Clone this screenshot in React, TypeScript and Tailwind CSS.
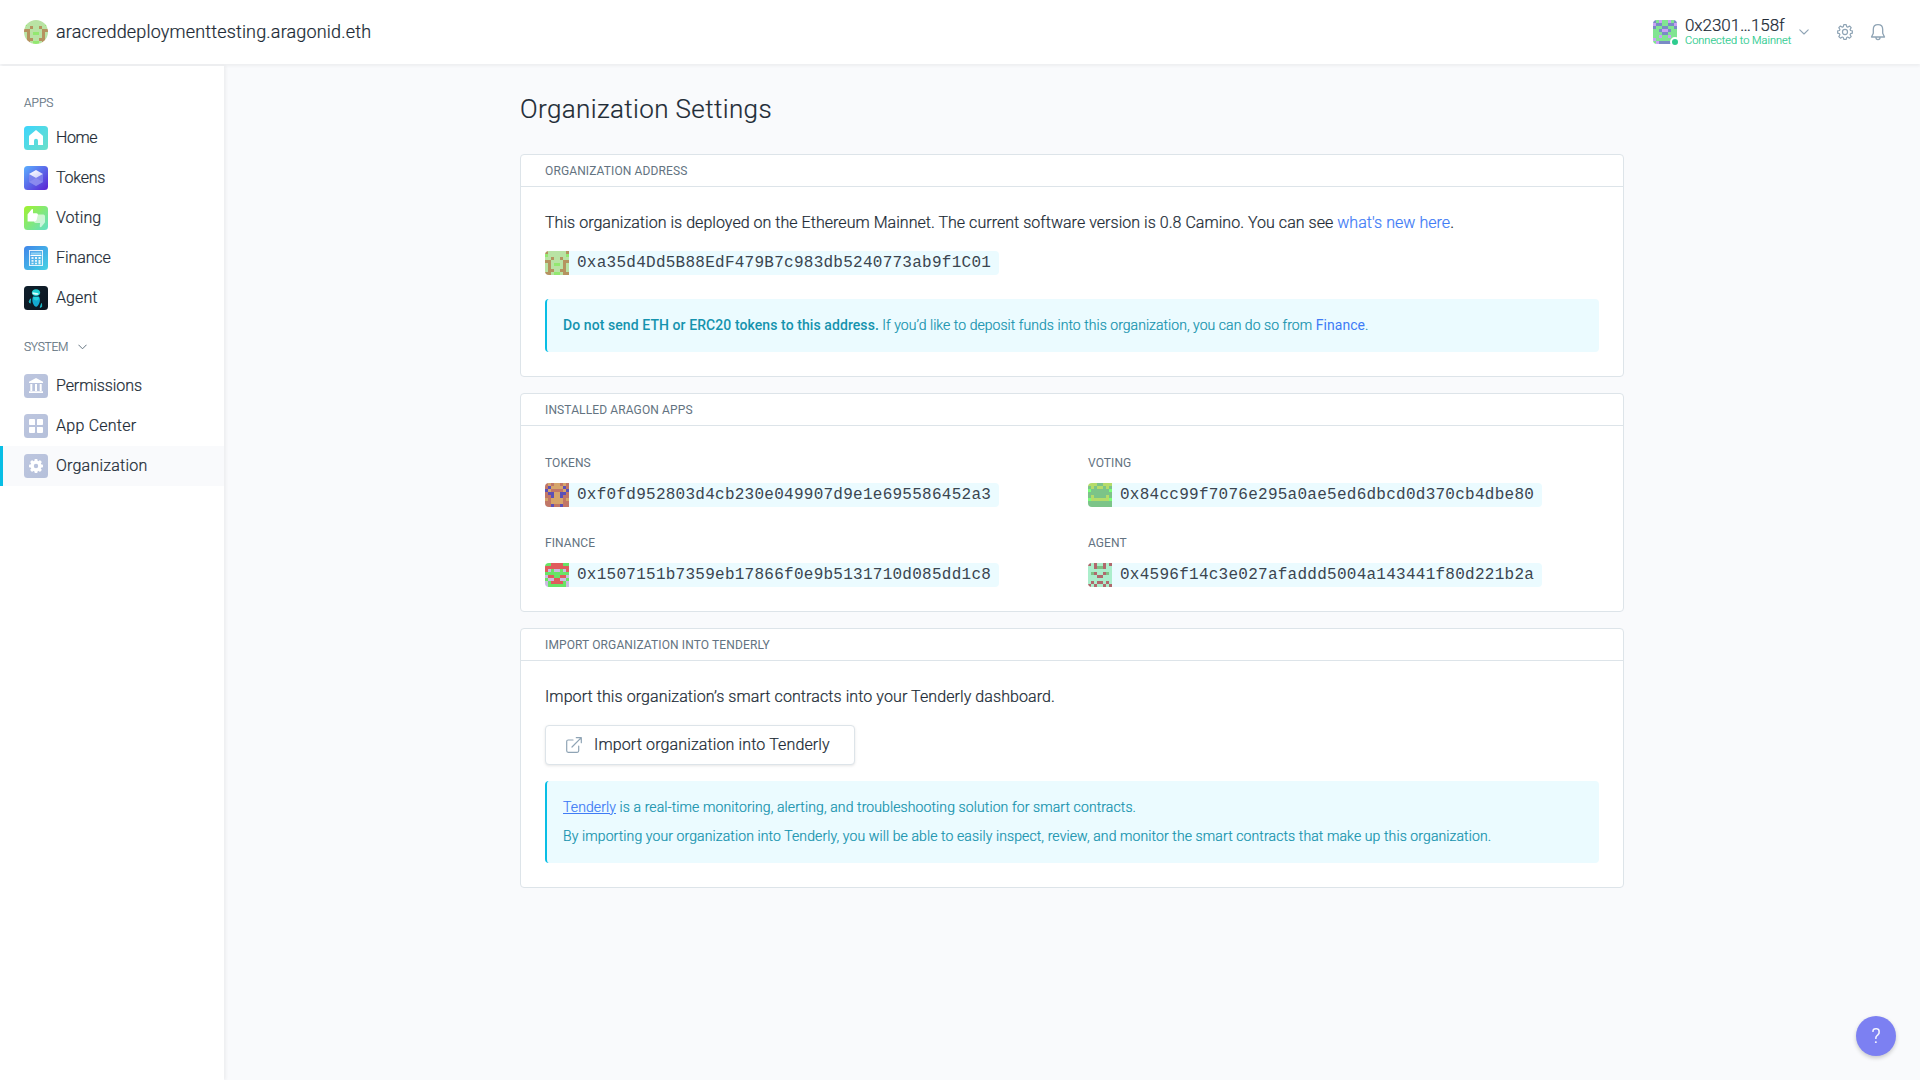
import type { ReactNode } from "react";

type Palette = Record<string, string>;

function Identicon({ rows, palette, className }: { rows: string[]; palette: Palette; className: string }) {
  return (
    <svg viewBox="0 0 8 8" shapeRendering="crispEdges" className={`h-6 w-6 shrink-0 ${className}`}>
      {rows.flatMap((row, y) =>
        (row + [...row].reverse().join("")).split("").map((c, x) => (
          <rect key={`${x}-${y}`} x={x} y={y} width="1" height="1" fill={palette[c]} />
        )),
      )}
    </svg>
  );
}

const org = {
  rows: ["B...", "G...", "..B.", "BB..", ".B.G", ".B..", ".BB.", "BB.G"],
  palette: { ".": "#b9e3a4", B: "#b5935f", G: "#93e870" },
};
const user = {
  rows: ["b.v.", "vbb.", "b..b", "..bv", "...b", "..v.", "v...", ".vbb"],
  palette: { ".": "#81e592", b: "#7a8bc6", v: "#c9a0f5" },
};
const apps = [
  {
    name: "Tokens",
    address: "0xf0fd952803d4cb230e049907d9e1e695586452a3",
    rows: ["r.r.", "rb..", "b.rr", "rbb.", "rrb.", ".r..", "rr..", "rrbr"],
    palette: { ".": "#d6a56b", r: "#c17767", b: "#5b50b8" },
  },
  {
    name: "Voting",
    address: "0x84cc99f7076e295a0ae5ed6dbcd0d370cb4dbe80",
    rows: ["yyyd", "dydy", "gddd", "dddd", "dydd", "gyyy", "dddd", "dddd"],
    palette: { d: "#7cc488", y: "#b5dc6a", g: "#7dff7b" },
  },
  {
    name: "Finance",
    address: "0x1507151b7359eb17866f0e9b5131710d085dd1c8",
    rows: ["..rr", "rrrr", "rl.l", "....", "lrr.", ".llr", "l.rr", "l..."],
    palette: { ".": "#68e466", r: "#e05c5c", l: "#c9bbe0" },
  },
  {
    name: "Agent",
    address: "0x4596f14c3e027afaddd5004a143441f80d221b2a",
    rows: ["r.r.", "..rg", "....", ".gr.", "...r", "....", ".r.r", "r.r."],
    palette: { ".": "#abeecb", r: "#b0696d", g: "#7ec084" },
  },
];

function AppIcon({ id, from, to, children }: { id: string; from: string; to: string; children: ReactNode }) {
  return (
    <svg viewBox="0 0 24 24" className="h-6 w-6 shrink-0">
      <defs>
        <linearGradient id={id} x1="0" y1="0" x2="1" y2="1">
          <stop stopColor={from} />
          <stop offset="1" stopColor={to} />
        </linearGradient>
        <linearGradient id={`${id}-shine`} x1="0" y1="0" x2="1" y2="1">
          <stop stopColor="#ffffff" />
          <stop offset="1" stopColor="#c9cbfa" />
        </linearGradient>
      </defs>
      <rect width="24" height="24" rx="3.5" fill={`url(#${id})`} />
      {children}
    </svg>
  );
}

const homeIcon = (
  <AppIcon id="home" from="#3dd5fd" to="#6be0c8">
    <path d="M12 4 18.3 9.2c.5.4.7.8.7 1.4V19h-5v-4.2a2 2 0 0 0-4 0V19H5v-8.400c0-.6.2-1 .7-1.400Z" fill="#fff" />
  </AppIcon>
);
const tokensIcon = (
  <AppIcon id="tokens" from="#5bb0ff" to="#5b1fd2">
    <path d="M5 8v8l7 4 7-4V8l-7 4Z" fill="#8587ee" opacity=".75" />
    <path d="M12 12 5 16l7 4 7-4Z" fill="#9a97f2" opacity=".5" />
    <path d="M12 4 19 8l-7 4-7-4Z" fill="url(#tokens-shine)" />
  </AppIcon>
);
const votingIcon = (
  <AppIcon id="voting" from="#a2f22c" to="#62dfc8">
    <path d="M12 8.600h7.300q1.700 0 1.700 1.700v5.500q0 .7-.5 1.200L17.200 21q-1.700.6-1.400-1.400l.3-2.600h-4.600q-1.500 0-1.500-1.700Z" fill="#fff" opacity=".62" />
    <path d="M7.700 3.200q1.300-.9 1.300.7v3.400h3.400q1.800 0 1.500 1.500l-1.300 5.200q-.4 1.400-2 1.400H3.600V8.200Z" fill="#fff" />
  </AppIcon>
);
const financeIcon = (
  <AppIcon id="finance" from="#4186ea" to="#46d3e4">
    <rect x="5.500" y="4.500" width="13" height="15" fill="#fff" fillOpacity=".1" stroke="#fff" strokeOpacity=".85" />
    <path d="M7 6.500h10v2.200H7z" fill="#8ed0f4" />
    <path d="M6.500 9.500h11" stroke="#fff" />
    <path d="M7.500 11h2v2h-2zM11 11h2v2h-2zM14.500 11h2v2h-2zM7.500 14h2v1.800h-2zM11 14h2v1.800h-2zM7.500 16.800h2v1.400h-2zM11 16.800h2v1.400h-2zM14.500 14h2v4.200h-2z" fill="#fff" opacity=".85" />
  </AppIcon>
);
const agentIcon = (
  <AppIcon id="agent" from="#10202c" to="#0b1520">
    <path d="M12 3.200c2.600 0 4.200 1.600 4.200 3.600S14.500 10 12 10 7.800 8.800 7.800 6.800 9.400 3.200 12 3.200Z" fill="#1fcfd0" />
    <path d="M8.600 6.200c1.500.4 4 .4 6 1.200v1.200c-2 .6-5 .1-6-.8Z" fill="#d9ffff" />
    <path d="M9 10.500h6c1.200 2 1.200 4.200.5 6-.6 2-2 3.800-3 4.300-1.600.2-3.200-2-3.800-4.300-.5-2-.5-4 .3-6Z" fill="#14a9cf" />
    <path d="M9.500 11h5c.8 1.500.6 3-2.200 3.600-2.500-.4-3.600-2-2.800-3.600Z" fill="#22d2dd" />
    <path d="M6.500 12.800 5 16l1.200 1.200ZM17.500 17.500l-1.300 4 1.500-.8Z" stroke="#1ec3cf" strokeWidth=".8" fill="#1ec3cf" />
  </AppIcon>
);
const permissionsIcon = (
  <AppIcon id="permissions" from="#bdc6df" to="#b5c0da">
    <path d="M12 4 19 7.800V9H5V7.800ZM6.300 10h2v7h-2zM11 10h2v7h-2zM15.700 10h2v7h-2zM5 17.200h14V19H5z" fill="#fff" />
  </AppIcon>
);
const appCenterIcon = (
  <AppIcon id="center" from="#bdc6df" to="#b5c0da">
    <path d="M6 5h4.200q.8 0 .8.800V11H5.800Q5 11 5 10.200V6q0-1 1-1ZM13 5.800q0-.8.8-.8H18q1 0 1 1v4.200q0 .8-.8.8H13ZM5 13.800q0-.8.8-.8H11v5.200q0 .8-.8.8H6q-1 0-1-1ZM13 13h5.200q.8 0 .8.800V18q0 1-1 1h-4.200q-.8 0-.8-.8Z" fill="#fff" />
  </AppIcon>
);
const organizationIcon = (
  <AppIcon id="organization" from="#bdc6df" to="#b5c0da">
    <g fill="#fff">
      <path fillRule="evenodd" d="M12 6.500a5.500 5.500 0 1 0 0 11 5.500 5.500 0 0 0 0-11Zm0 3.300a2.200 2.200 0 1 1 0 4.400 2.200 2.200 0 0 1 0-4.400Z" />
      {[0, 45, 90, 135, 180, 225, 270, 315].map((a) => (
        <rect key={a} x="10.500" y="5" width="3" height="3.200" rx=".8" transform={`rotate(${a} 12 12)`} />
      ))}
    </g>
  </AppIcon>
);

function Chevron({ className }: { className: string }) {
  return (
    <svg viewBox="0 0 10 6" fill="none" stroke="currentColor" strokeWidth="1.100" strokeLinecap="round" strokeLinejoin="round" className={className}>
      <path d="m.8.800 4.200 4.200L9.200.800" />
    </svg>
  );
}

function NavItem({
  icon,
  label,
  active,
  tracking = "tracking-[-0.08px]",
}: {
  icon: ReactNode;
  label: string;
  active?: boolean;
  tracking?: string;
}) {
  return (
    <a
      className={`flex h-10 items-center gap-2 pr-6 ${
        active ? "border-l-[3px] border-[#08bee5] bg-[#f9fafc] pl-[21px]" : "pl-6"
      }`}
    >
      {icon}
      <span className={`pb-px ${tracking}`}>{label}</span>
    </a>
  );
}

function Card({ title, children }: { title: string; children: ReactNode }) {
  return (
    <section className="rounded border border-[#dde4e9] bg-white">
      <h2 className="flex h-8 items-center border-b border-[#dde4e9] px-6 text-xs font-normal tracking-[0.12px] text-[#637381] uppercase [-webkit-text-stroke-width:0px]">
        {title}
      </h2>
      <div className="px-6 pb-6">{children}</div>
    </section>
  );
}

function AddressBadge({ address, rows, palette }: { address: string; rows: string[]; palette: Palette }) {
  return (
    <div className="flex h-6 w-[454px] overflow-hidden rounded bg-[#ebfbff]">
      <Identicon rows={rows} palette={palette} className="" />
      <span className="pl-2 font-['Liberation_Mono',monospace] text-[16px] leading-[25px] tracking-[0.258px] whitespace-nowrap text-[#3a4550] [-webkit-text-stroke-width:0px]">
        {address}
      </span>
    </div>
  );
}

function InfoBox({ className, children }: { className: string; children: ReactNode }) {
  return (
    <div className={`rounded border-l-2 border-[#08bee5] bg-[#ebfbff] px-4 text-sm text-[#1593ae] ${className}`}>
      {children}
    </div>
  );
}

export default function App() {
  return (
    <div className="flex h-[1080px] w-[1920px] flex-col overflow-hidden bg-[#f9fafc] font-['Roboto',sans-serif] text-base font-light text-[#212b36] [-webkit-text-stroke-width:0.2px]">
      <header className="z-10 flex h-16 shrink-0 items-center justify-between bg-white pr-[34px] pl-6 shadow-[0_2px_3px_rgba(0,0,0,0.05)]">
        <div className="flex items-center gap-2">
          <Identicon {...org} className="rounded-full" />
          <span className="text-lg tracking-[0.17px]">aracreddeploymenttesting.aragonid.eth</span>
        </div>
        <div className="flex items-center">
          <div className="relative">
            <Identicon {...user} className="rounded" />
            <span className="absolute -right-[3px] -bottom-[3px] h-[10px] w-[10px] rounded-full border-2 border-white bg-[#2ecc8f]" />
          </div>
          <div className="w-[122px] pb-px pl-2">
            <div className="text-[17px] leading-[19px] tracking-[-0.06px]">0x2301…158f</div>
            <div className="text-[11px] leading-3 whitespace-nowrap text-[#2ecc8f]">Connected to Mainnet</div>
          </div>
          <Chevron className="h-[6px] w-[10px] text-[#8fa4b5]" />
          <svg viewBox="0 0 24 24" fill="none" stroke="#8fa4b5" strokeWidth="1.800" strokeLinejoin="round" className="ml-7 h-4 w-4">
            <path d="M10.200 1h3.600l.7 3 1.600.7 2.700-1.700 2.500 2.500-1.700 2.700.7 1.600 2.700.6v3.400l-2.700.700-.7 1.600 1.700 2.700-2.500 2.500-2.700-1.700-1.600.7-.7 2.700h-3.600l-.7-2.700-1.600-.7-2.700 1.700-2.500-2.500 1.700-2.700-.7-1.600L1 13.800v-3.400l2.700-.6.7-1.600-1.700-2.700L5.200 3l2.700 1.700 1.600-.7Z" />
            <circle cx="12" cy="12" r="3.800" />
          </svg>
          <svg viewBox="0 0 16 18" fill="none" stroke="#8fa4b5" strokeWidth="1.300" strokeLinejoin="round" strokeLinecap="round" className="ml-[17px] h-[18px] w-4">
            <path d="M8 1.600c-3 0-4.700 2-4.700 4.800v3.800L1.500 14h13l-1.800-3.800V6.400C12.700 3.600 11 1.600 8 1.600ZM5.900 14.200a2.100 2.400 0 0 0 4.200 0" />
          </svg>
        </div>
      </header>

      <div className="flex min-h-0 flex-1">
        <nav className="z-20 mt-[2px] w-56 shrink-0 bg-white shadow-[2px_0_3px_rgba(0,0,0,0.05)]">
          <h3 className="px-6 pt-[29px] pb-[7px] text-xs leading-4 text-[#637381]">APPS</h3>
          <NavItem icon={homeIcon} label="Home" tracking="tracking-[-0.4px]" />
          <NavItem icon={tokensIcon} label="Tokens" tracking="tracking-[-0.25px]" />
          <NavItem icon={votingIcon} label="Voting" tracking="tracking-[0.05px]" />
          <NavItem icon={financeIcon} label="Finance" />
          <NavItem icon={agentIcon} label="Agent" tracking="tracking-[0.1px]" />
          <h3 className="flex h-12 items-center gap-[10px] px-6 pt-[9px] text-xs leading-4 tracking-[-0.25px] text-[#637381]">
            SYSTEM <Chevron className="h-[6px] w-[9px]" />
          </h3>
          <NavItem icon={permissionsIcon} label="Permissions" />
          <NavItem icon={appCenterIcon} label="App Center" tracking="tracking-[0.25px]" />
          <NavItem icon={organizationIcon} label="Organization" active tracking="tracking-[0.22px]" />
        </nav>

        <main className="flex flex-1 flex-col items-center">
          <div className="flex w-[1104px] flex-col gap-4">
            <h1 className="h-[74px] pt-[25px] text-[26px] leading-[40px] font-light tracking-[0.38px]">Organization Settings</h1>

            <Card title="Organization address">
              <p className="pt-6 leading-6 tracking-[0.038px]">
                This organization is deployed on the Ethereum Mainnet. The current software version is 0.8 Camino. You can
                see <a className="text-[#3e7bf6]">what's new here</a>.
              </p>
              <div className="mt-4">
                <AddressBadge address="0xa35d4Dd5B88EdF479B7c983db5240773ab9f1C01" {...org} />
              </div>
              <InfoBox className="mt-6 flex h-[53px] items-center pb-[2px]">
                <p>
                  <strong className="font-medium tracking-[0.08px] [-webkit-text-stroke-width:0px]">
                    Do not send ETH or ERC20 tokens to this address.
                  </strong>{" "}
                  <span className="tracking-[0.05px]">
                    If you’d like to deposit funds into this organization, you can do so from{" "}
                    <a className="font-normal text-[#3e7bf6] [-webkit-text-stroke-width:0px]">Finance</a>.
                  </span>
                </p>
              </InfoBox>
            </Card>

            <Card title="Installed Aragon apps">
              <div className="grid grid-cols-2 gap-x-8 gap-y-7 pt-[29px]">
                {apps.map((app) => (
                  <div key={app.name}>
                    <h3 className="mb-3 text-xs leading-4 font-normal tracking-[0.08px] text-[#637381] uppercase [-webkit-text-stroke-width:0px]">
                      {app.name}
                    </h3>
                    <AddressBadge address={app.address} rows={app.rows} palette={app.palette} />
                  </div>
                ))}
              </div>
            </Card>

            <Card title="Import organization into Tenderly">
              <p className="pt-6 leading-6 tracking-[0.088px]">
                Import this organization’s smart contracts into your Tenderly dashboard.
              </p>
              <button className="mt-4 flex h-10 w-[310px] items-center rounded border border-[#dde4e9] bg-white pl-5 shadow-[0_1px_3px_rgba(0,0,0,0.1)]">
                <svg viewBox="0 0 16 16" fill="none" stroke="#8fa4b5" strokeWidth="1.200" strokeLinecap="round" strokeLinejoin="round" className="h-4 w-4">
                  <path d="M7 3H2.200Q.700 3 .700 4.500v9.300q0 1.500 1.500 1.500h9q1.500 0 1.500-1.500V9M10.300.700h5v5M15.300.700 6 10" />
                </svg>
                <span className="pb-px pl-3 tracking-[0.13px]">Import organization into Tenderly</span>
              </button>
              <InfoBox className="mt-4 h-[82px] pt-3">
                <p className="leading-[29px] tracking-[0.108px]">
                  <a className="text-[#3e7bf6] underline">Tenderly</a> is a real-time monitoring, alerting, and
                  troubleshooting solution for smart contracts.
                </p>
                <p className="leading-[29px] tracking-[0.108px]">
                  By importing your organization into Tenderly, you will be able to easily inspect, review, and monitor the
                  smart contracts that make up this organization.
                </p>
              </InfoBox>
            </Card>
          </div>
        </main>
      </div>

      <button className="fixed right-6 bottom-6 z-30 flex h-10 w-10 items-center justify-center rounded-full bg-[#7c80f2] pb-px text-[20px] font-light text-white shadow-[0_2px_4px_rgba(0,0,0,0.2)]">
        ?
      </button>
    </div>
  );
}
